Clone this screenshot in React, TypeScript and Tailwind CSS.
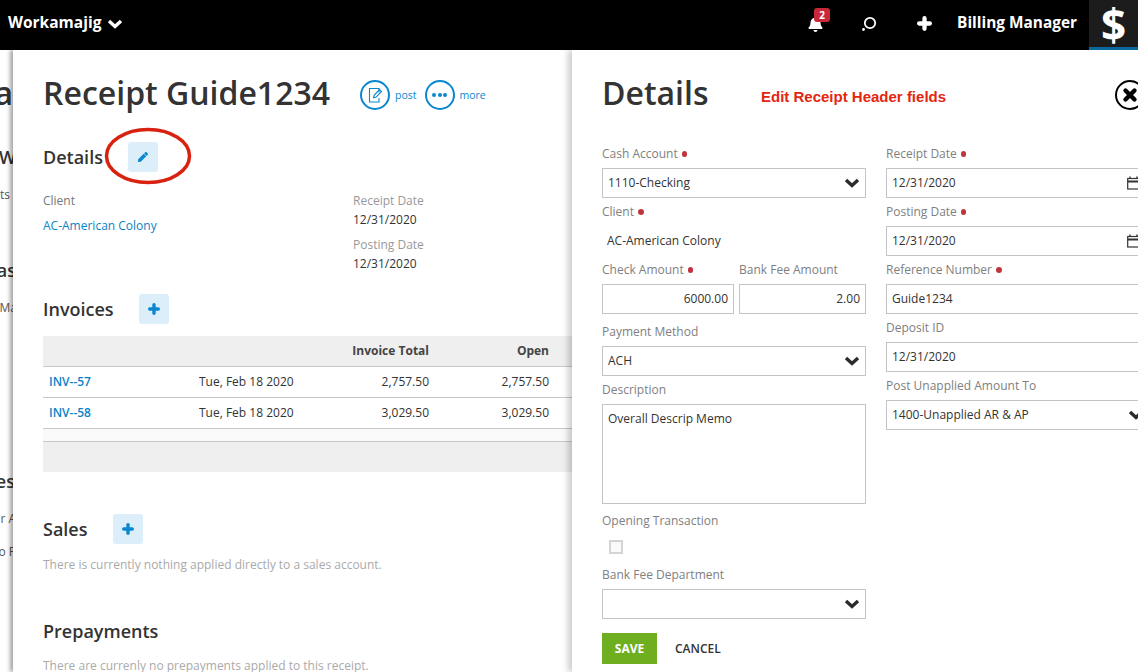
import React from 'react';
import { FaBell, FaPen } from 'react-icons/fa';

// ============================================================================
// Small shared pieces
// ============================================================================

function Chevron({ color = '#2b2b2b' }: { color?: string }) {
  return (
    <svg width="16" height="12" viewBox="0 0 16 12" className="shrink-0">
      <path d="M2 3l6 5.5L14 3" fill="none" stroke={color} strokeWidth="3.4" />
    </svg>
  );
}

function PlusIcon({ size, width }: { size: number; width: number }) {
  return (
    <svg width={size} height={size} viewBox="0 0 14 14" className="shrink-0">
      <path d="M7 2v10M2 7h10" fill="none" stroke="currentColor" strokeWidth={width} strokeLinecap="round" />
    </svg>
  );
}

function CalendarIcon() {
  return (
    <svg width="13" height="14" viewBox="0 0 13 14" className="shrink-0 mr-[4px]">
      <rect x="0.7" y="2.5" width="11.6" height="10.5" fill="none" stroke="#333" strokeWidth="1.2" />
      <path d="M0.7 5.5h11.6" fill="none" stroke="#333" strokeWidth="2" />
      <path d="M3 0.5v2.5M10 0.5v2.5" fill="none" stroke="#333" strokeWidth="1.4" />
    </svg>
  );
}

function Label({ text, required }: { text: string; required?: boolean }) {
  return (
    <div className="h-[28px] flex items-center text-[12px] text-[#808080] whitespace-nowrap">
      {text}
      {required && <span className="ml-[4px] w-[5.5px] h-[5.5px] rounded-full bg-[#c0343c]" />}
    </div>
  );
}

function Box({ children, right }: { children?: React.ReactNode; right?: boolean }) {
  return (
    <div
      className={`h-[30px] border border-[#c4c4c4] bg-white flex items-center px-[5px] text-[12px] text-[#333] whitespace-nowrap ${
        right ? 'justify-end' : 'justify-between'
      }`}
    >
      {children}
    </div>
  );
}

function SelectBox({ value }: { value?: string }) {
  return (
    <Box>
      <span>{value}</span>
      <Chevron />
    </Box>
  );
}

function DateBox({ value }: { value: string }) {
  return (
    <Box>
      <span>{value}</span>
      <CalendarIcon />
    </Box>
  );
}

function SquareButton({ icon }: { icon: React.ReactNode }) {
  return (
    <div className="w-[30px] h-[30px] rounded-[3px] bg-[#dceefa] flex items-center justify-center text-[#0a87cf]">
      {icon}
    </div>
  );
}

// Clipped text of the page behind the receipt panel
const behindRows = [
  { text: 'a', row: 'mt-[33px]', cls: 'text-[32px] font-semibold text-[#333]' },
  { text: 'W', row: 'mt-[44px]', cls: 'text-[18px] font-semibold text-[#333] -mr-[3px]' },
  { text: 'ts', row: 'mt-[18px]', cls: 'text-[12px] text-[#555] mr-[3px]' },
  { text: 'as', row: 'mt-[55px]', cls: 'text-[18px] font-semibold text-[#333] -mr-[3px]' },
  { text: 'Ma', row: 'mt-[18px]', cls: 'text-[12px] text-[#555] -mr-[4px]' },
  { text: 'es', row: 'mt-[153px]', cls: 'text-[18px] font-semibold text-[#333] -mr-[2px]' },
  { text: 'r A', row: 'mt-[18px]', cls: 'text-[12px] text-[#555] -mr-[3px]' },
  { text: 'o P', row: 'mt-[13px]', cls: 'text-[12px] text-[#555] -mr-[3px]' },
];

// ============================================================================
// Component
// ============================================================================

export default function App() {
  return (
    <div className="w-[1138px] h-[672px] overflow-hidden bg-white flex flex-col font-['Open_Sans',sans-serif]">
      {/* Top bar */}
      <header className="h-[50px] shrink-0 bg-black text-white flex items-center relative z-20">
        <span className="ml-[8px] mb-[4px] text-[15.5px] font-bold">Workamajig</span>
        <div className="ml-[6px] mb-[3px]">
          <Chevron color="#fff" />
        </div>
        <div className="ml-auto relative mr-[38px] mb-[2px]">
          <FaBell className="w-[15px] h-[16px]" />
          <span className="absolute -top-[8px] left-[6px] w-[16px] h-[14px] rounded-[3px] bg-[#c8283a] text-[10px] leading-[14px] font-bold text-center">
            2
          </span>
        </div>
        <svg width="16" height="16" viewBox="0 0 16 16" className="mr-[40px] mb-[3px]">
          <circle cx="9" cy="7" r="5.2" fill="none" stroke="#fff" strokeWidth="1.8" />
          <circle cx="2.5" cy="13.5" r="1.4" fill="#fff" />
        </svg>
        <div className="mr-[25px] mb-[3px]">
          <PlusIcon size={15} width={4} />
        </div>
        <span className="text-[15.4px] font-bold mr-[12px] mb-[4px]">Billing Manager</span>
        <div className="w-[49px] h-[50px] bg-[#1c1c1c] border-b-[3px] border-[#0a6a9e] flex items-center justify-center overflow-hidden">
          <span className="text-[44px] leading-none font-bold">$</span>
        </div>
      </header>

      <div className="flex-1 flex min-h-0 relative">
        {/* Page behind */}
        <div className="w-[13px] shrink-0 overflow-hidden flex flex-col">
          {behindRows.map((r) => (
            <div key={r.text} className={`${r.row} h-[20px] shrink-0 flex items-center justify-end whitespace-nowrap leading-none`}>
              <span className={r.cls}>{r.text}</span>
            </div>
          ))}
        </div>

        {/* Receipt panel */}
        <section className="w-[559px] shrink-0 bg-white pl-[30px] overflow-hidden shadow-[-3px_0_4px_rgba(0,0,0,0.35)] relative">
          <div className="flex items-center mt-[30px] h-[30px]">
            <h1 className="text-[32px] font-semibold text-[#333] whitespace-nowrap leading-none mb-[4px]">Receipt Guide1234</h1>
            <div className="ml-[30px] flex items-center text-[#0a87cf] text-[10.5px]">
              <div className="w-[30px] h-[30px] rounded-full border-2 border-[#0a87cf] flex items-center justify-center">
                <svg width="18" height="18" viewBox="0 0 18 18" fill="none" stroke="#0a87cf" strokeWidth="1.1">
                  <path d="M13 6.5V2.5H3.5v13.5H13v-4" />
                  <path d="M7.5 11.8l.7-2.7 5.3-5.6 2 2-5.3 5.6z" />
                </svg>
              </div>
              <span className="ml-[5px] mt-[1px]">post</span>
              <div className="ml-[8px] w-[30px] h-[30px] rounded-full border-2 border-[#0a87cf] flex items-center justify-center gap-[1.5px]">
                <span className="w-[4px] h-[4px] rounded-full bg-[#0a87cf]" />
                <span className="w-[4px] h-[4px] rounded-full bg-[#0a87cf]" />
                <span className="w-[4px] h-[4px] rounded-full bg-[#0a87cf]" />
              </div>
              <span className="ml-[5px] mt-[1px]">more</span>
            </div>
          </div>

          {/* Details */}
          <div className="flex items-center mt-[32px] h-[30px]">
            <h2 className="text-[18px] font-semibold text-[#333] w-[85px]">Details</h2>
            <SquareButton icon={<FaPen className="w-[10px] h-[10px]" />} />
          </div>
          <div className="flex mt-[19px] text-[12px]">
            <div className="w-[310px]">
              <div className="h-[20px] leading-[20px] text-[#777]">Client</div>
              <div className="mt-[5px] h-[20px] leading-[20px] text-[#0a84c6]">AC-American Colony</div>
            </div>
            <div>
              <div className="h-[20px] leading-[20px] text-[#999]">Receipt Date</div>
              <div className="h-[18px] leading-[18px] text-[#333]">12/31/2020</div>
              <div className="mt-[6px] h-[20px] leading-[20px] text-[#999]">Posting Date</div>
              <div className="h-[18px] leading-[18px] text-[#333]">12/31/2020</div>
            </div>
          </div>

          {/* Invoices */}
          <div className="flex items-center mt-[21px] h-[30px]">
            <h2 className="text-[18px] font-semibold text-[#333] w-[96px]">Invoices</h2>
            <SquareButton icon={<PlusIcon size={12} width={4} />} />
          </div>
          <div className="mt-[12px] text-[12px] text-[#333]">
            <div className="h-[31px] bg-[#efefef] border-b border-[#c8c8c8] flex items-center font-bold text-[#444]">
              <span className="w-[386px] text-right">Invoice Total</span>
              <span className="w-[120px] text-right">Open</span>
            </div>
            {[
              ['INV--57', '2,757.50'],
              ['INV--58', '3,029.50'],
            ].map(([inv, amount]) => (
              <div key={inv} className="h-[31px] border-b border-[#c8c8c8] flex items-center">
                <span className="w-[156px] pl-[6px] font-semibold text-[#0a84c6]">{inv}</span>
                <span className="w-[150px]">Tue, Feb 18 2020</span>
                <span className="w-[80px] text-right">{amount}</span>
                <span className="w-[120px] text-right">{amount}</span>
              </div>
            ))}
            <div className="h-[13px] bg-[#f9f9f9] border-b border-[#c8c8c8]" />
            <div className="h-[30px] bg-[#efefef]" />
          </div>

          {/* Sales */}
          <div className="flex items-center mt-[42px] h-[30px]">
            <h2 className="text-[18px] font-semibold text-[#333] w-[70px]">Sales</h2>
            <SquareButton icon={<PlusIcon size={12} width={4} />} />
          </div>
          <p className="mt-[11px] text-[12px] leading-[20px] text-[#aaa] whitespace-nowrap">
            There is currently nothing applied directly to a sales account.
          </p>

          {/* Prepayments */}
          <h2 className="mt-[41px] h-[30px] leading-[30px] text-[18px] font-semibold text-[#333]">Prepayments</h2>
          <p className="mt-[10px] text-[12px] leading-[20px] text-[#aaa] whitespace-nowrap">
            There are currenly no prepayments applied to this receipt.
          </p>

          {/* Annotation oval */}
          <svg width="92" height="60" viewBox="0 0 92 60" className="absolute left-[90px] top-[76px]">
            <ellipse cx="45" cy="30" rx="41.5" ry="26.5" fill="none" stroke="#d8220f" strokeWidth="3.5" />
          </svg>
        </section>

        {/* Details panel */}
        <section className="flex-1 min-w-0 bg-white pl-[30px] overflow-hidden shadow-[-4px_0_6px_rgba(0,0,0,0.2)] relative">
          <div className="flex items-center mt-[30px] h-[30px] relative">
            <h1 className="text-[32px] font-semibold text-[#333] leading-none w-[159px] mb-[4px]">Details</h1>
            <span className="font-['Liberation_Sans',sans-serif] text-[15px] font-bold text-[#e3260f] mt-[4px]">
              Edit Receipt Header fields
            </span>
            <div className="absolute left-[513px] top-0 w-[30px] h-[30px] rounded-full border-2 border-black flex items-center justify-center">
              <svg width="16" height="16" viewBox="0 0 16 16">
                <path d="M3.5 3.5l9 9M12.5 3.5l-9 9" fill="none" stroke="#000" strokeWidth="4.4" strokeLinecap="round" />
              </svg>
            </div>
          </div>

          <div className="flex gap-[20px] mt-[30px] w-[548px]">
            {/* Left column */}
            <div className="w-[264px] shrink-0">
              <Label text="Cash Account" required />
              <SelectBox value="1110-Checking" />
              <Label text="Client" required />
              <div className="h-[30px] flex items-center pl-[5px] text-[12px] text-[#333]">AC-American Colony</div>
              <div className="flex gap-[5px]">
                <div className="w-[132px]">
                  <Label text="Check Amount" required />
                  <Box right>6000.00</Box>
                </div>
                <div className="w-[127px]">
                  <Label text="Bank Fee Amount" />
                  <Box right>2.00</Box>
                </div>
              </div>
              <div className="mt-[4px]">
                <Label text="Payment Method" />
              </div>
              <SelectBox value="ACH" />
              <Label text="Description" />
              <div className="h-[100px] border border-[#c4c4c4] px-[5px] py-[5px] text-[12px] leading-[18px] text-[#333]">
                Overall Descrip Memo
              </div>
              <div className="mt-[3px]">
                <Label text="Opening Transaction" />
              </div>
              <div className="ml-[7px] mt-[5px] w-[14px] h-[14px] border-2 border-[#d4d4d4] bg-[#fafafa]" />
              <div className="mt-[7px]">
                <Label text="Bank Fee Department" />
              </div>
              <SelectBox />
              <div className="flex items-center mt-[14px]">
                <div className="w-[55px] h-[31px] bg-[#6fae1e] text-white text-[12px] font-bold flex items-center justify-center">
                  SAVE
                </div>
                <span className="ml-[18px] text-[12px] font-semibold text-[#333]">CANCEL</span>
              </div>
            </div>

            {/* Right column */}
            <div className="w-[264px] shrink-0">
              <Label text="Receipt Date" required />
              <DateBox value="12/31/2020" />
              <Label text="Posting Date" required />
              <DateBox value="12/31/2020" />
              <Label text="Reference Number" required />
              <Box>Guide1234</Box>
              <Label text="Deposit ID" />
              <Box>12/31/2020</Box>
              <Label text="Post Unapplied Amount To" />
              <SelectBox value="1400-Unapplied AR & AP" />
            </div>
          </div>
        </section>
      </div>
    </div>
  );
}
